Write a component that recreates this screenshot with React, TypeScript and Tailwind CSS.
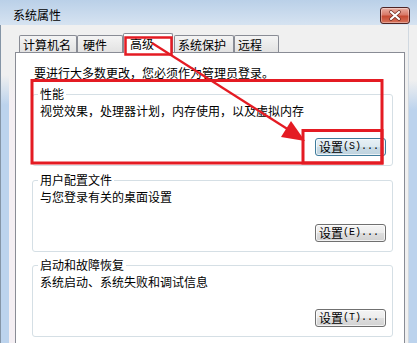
import React from "react";

const CJK = "font-['Noto_Sans_CJK_SC','Noto_Sans_CJK_JP',sans-serif]";

function Btn({ k, def }: { k: string; def?: boolean }) {
  return (
    <div
      className={
        def
          ? "flex h-[18px] w-[71px] items-center rounded-[3px] border border-[#3f7c9c] bg-[linear-gradient(to_bottom,#e8f1f6_0%,#dbe8ef_50%,#c9dbe5_50%,#bed3df_100%)] pl-[3px] leading-[14px] shadow-[inset_0_0_0_1px_rgba(255,255,255,0.7)]"
          : "flex h-[18px] w-[71px] items-center rounded-[3px] border border-[#707070] bg-[linear-gradient(to_bottom,#f4f4f4_0%,#ececec_50%,#dedede_50%,#d2d2d2_100%)] pl-[3px] leading-[14px] shadow-[inset_0_0_0_1px_rgba(255,255,255,0.7)]"
      }
    >
      <span>设置</span>
      <span className="font-['Liberation_Mono',monospace] text-[10px]">({k})...</span>
    </div>
  );
}

function Group({
  title,
  desc,
  k,
  def,
  mt,
}: {
  title: string;
  desc: string;
  k: string;
  def?: boolean;
  mt: string;
}) {
  return (
    <fieldset
      className={
        "ml-[16px] mr-[11px] rounded-[3px] border border-[#d5dfe5] px-[5px] pb-[9px] " + mt
      }
    >
      <legend className="px-[2px] leading-[14px]">{title}</legend>
      <div className="mt-[3px] pl-[2px] leading-[14px]">{desc}</div>
      <div className="mt-[20px] flex justify-end pr-[1px]">
        <Btn k={k} def={def} />
      </div>
    </fieldset>
  );
}

export default function App() {
  return (
    <div
      className={
        "relative flex h-[343px] w-[417px] flex-col overflow-hidden text-[12px] text-black " + CJK
      }
    >
      {/* title bar */}
      <div className="flex h-[25px] items-start bg-[linear-gradient(to_bottom,#bad0e8,#d6e3f1)]">
        <span className="ml-[13px] mt-[8px] leading-[14px]">系统属性</span>
        <div className="ml-auto mr-[7px] mt-[7px] h-[17px] w-[30px] rounded-[3px] border border-[#4e2424] bg-[linear-gradient(to_bottom,#eab0a4_0%,#d97a68_45%,#c64a32_55%,#d8745c_100%)] shadow-[inset_0_0_0_1px_rgba(255,255,255,0.35)]">
          <svg width="28" height="15" viewBox="0 0 28 15">
            <path d="M10 4 L18 11 M18 4 L10 11" stroke="#6b2a20" strokeWidth="3.6" strokeLinecap="round" />
            <path d="M10 4 L18 11 M18 4 L10 11" stroke="#ffffff" strokeWidth="2.2" strokeLinecap="round" />
          </svg>
        </div>
      </div>

      {/* body */}
      <div className="flex flex-1">
        <div className="flex w-[15px] border-l border-[#8595a6]">
          <div className="w-[8px] bg-[linear-gradient(to_bottom,#f0f0f0_50px,#bcd3ed_80px)]" />
          <div className="flex-1 bg-[linear-gradient(to_bottom,#f0f0f0_50px,#f4eff3_80px)]" />
        </div>

        <div className="flex w-[390px] flex-col bg-[#f0f0f0]">
          {/* tabs */}
          <div className="flex h-[27px] items-end pl-[4px]">
            <div className="h-[17px] w-[58px] rounded-t-[2px] border border-b-0 border-[#898c95] bg-[linear-gradient(to_bottom,#f4f4f4,#e2e2e2)] pl-[3px] pt-[2px] leading-[14px]">
              计算机名
            </div>
            <div className="h-[17px] w-[46px] rounded-t-[2px] border border-b-0 border-[#898c95] bg-[linear-gradient(to_bottom,#f4f4f4,#e2e2e2)] pl-[5px] pt-[2px] leading-[14px]">
              硬件
            </div>
            <div className="relative z-10 -mb-px h-[20px] w-[50px] rounded-t-[2px] border border-b-0 border-[#898c95] bg-white pl-[6px] pt-[3px] leading-[14px]">
              高级
            </div>
            <div className="ml-[1px] h-[17px] w-[60px] rounded-t-[2px] border border-b-0 border-[#898c95] bg-[linear-gradient(to_bottom,#f4f4f4,#e2e2e2)] pl-[3px] pt-[2px] leading-[14px]">
              系统保护
            </div>
            <div className="h-[17px] w-[45px] rounded-t-[2px] border border-b-0 border-[#898c95] bg-[linear-gradient(to_bottom,#f4f4f4,#e2e2e2)] pl-[3px] pt-[2px] leading-[14px]">
              远程
            </div>
          </div>

          {/* panel */}
          <div className="flex-1 border border-b-0 border-[#898c95] bg-white pt-[13px]">
            <div className="pl-[18px] leading-[14px]">要进行大多数更改，您必须作为管理员登录。</div>
            <Group
              mt="mt-[7px]"
              title="性能"
              desc="视觉效果，处理器计划，内存使用，以及虚拟内存"
              k="S"
              def
            />
            <Group mt="mt-[7px]" title="用户配置文件" desc="与您登录有关的桌面设置" k="E" />
            <Group mt="mt-[6px]" title="启动和故障恢复" desc="系统启动、系统失败和调试信息" k="T" />
          </div>
        </div>

        <div className="flex w-[12px]">
          <div className="w-[3px] bg-[#f0f0f0]" />
          <div className="flex-1 border-l border-[#d0d8e0] bg-[linear-gradient(to_bottom,#f0f0f0_55px,#bcd3ed_85px)]" />
        </div>
      </div>

      {/* red annotation overlay */}
      <svg className="pointer-events-none absolute left-0 top-0 z-20" width="417" height="343">
        <g fill="none" stroke="#e41b23">
          <rect x="125.5" y="37.5" width="46" height="17" strokeWidth="2.5" />
          <rect x="32" y="80.5" width="350" height="82.5" strokeWidth="3" />
          <rect x="303" y="130.5" width="79" height="32.5" strokeWidth="3" />
          <line x1="152" y1="43" x2="289" y2="130" strokeWidth="2.2" />
        </g>
        <polygon points="305,141 281,137 291,121" fill="#e41b23" />
      </svg>
    </div>
  );
}
